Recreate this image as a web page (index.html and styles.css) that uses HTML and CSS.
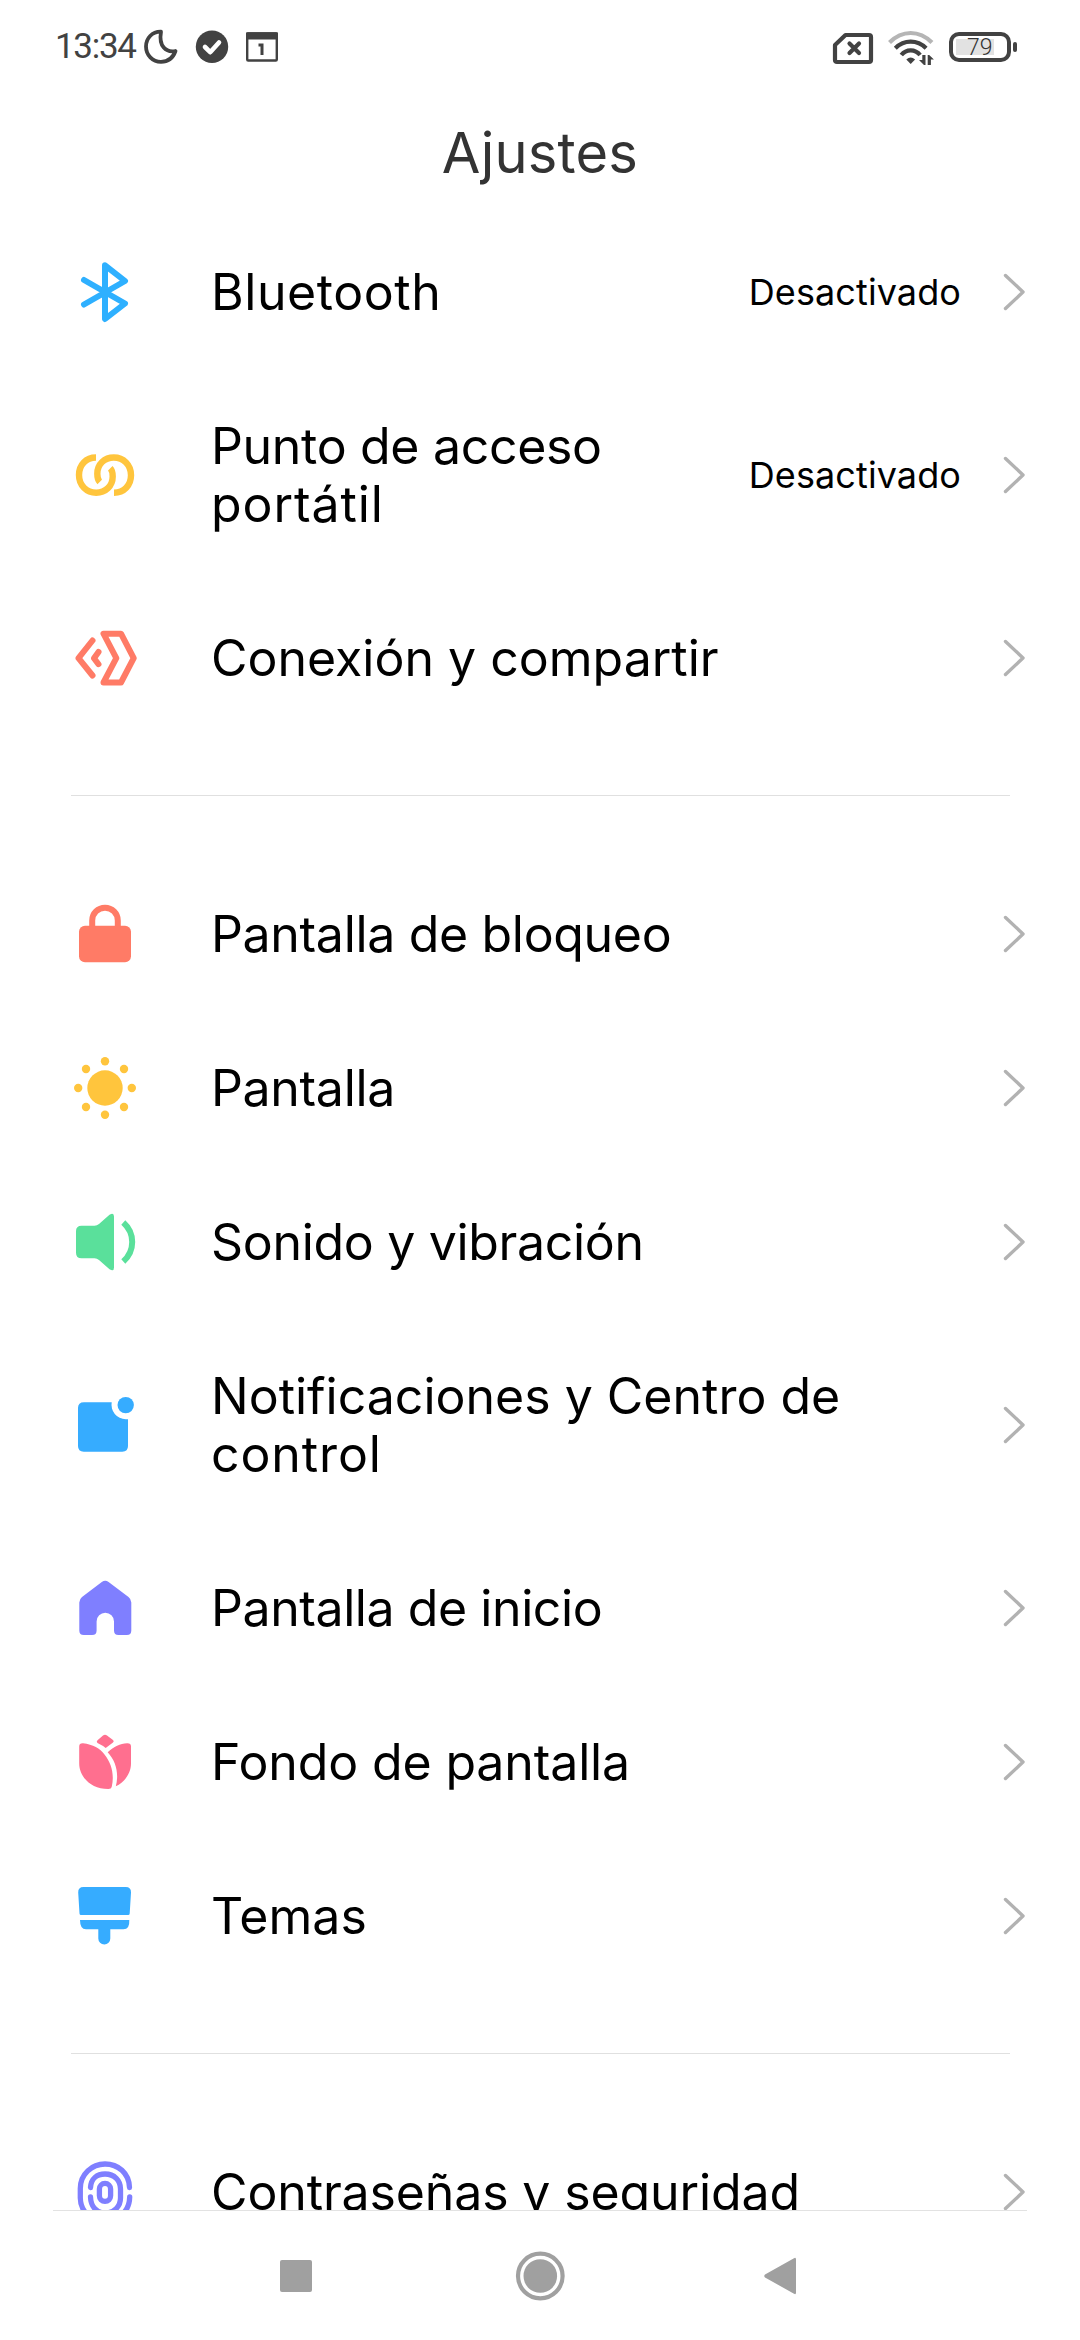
FILE: index.html
```
<!DOCTYPE html>
<html lang="es">
<head>
<meta charset="utf-8">
<title>Ajustes</title>
<link rel="stylesheet" href="styles.css">
</head>
<body>
<svg class="defs" width="0" height="0" aria-hidden="true">
  <symbol id="chevron" viewBox="0 0 24 40"><path d="M3.5 3.5 21 20 3.5 36.5" fill="none" stroke="#b2b2b2" stroke-width="3.4" stroke-linecap="round" stroke-linejoin="round"/></symbol>
</svg>
<div class="screen">
  <header class="status">
    <div class="status-side">
      <span class="clock">13:34</span>
      <svg class="moon" width="36" height="40" viewBox="0 0 36 40"><path d="M18 4.7C9 4.5 3 11.500 3 19.500c0 8.500 6.500 15.300 15 15.300 6.800 0 12-3.800 14.500-10.800-9.500 1.800-17-4.500-14.500-19.300z" fill="none" stroke="#424242" stroke-width="3.8" stroke-linejoin="round"/></svg>
      <svg class="check" width="34" height="40" viewBox="0 0 34 40"><circle cx="17" cy="19.800" r="16.200" fill="#424242"/><path d="m10 20 5.200 5.200L24 15.500" fill="none" stroke="#fff" stroke-width="4.600" stroke-linecap="round" stroke-linejoin="round"/></svg>
      <svg class="calendar" width="32" height="40" viewBox="0 0 32 40"><rect x="1.200" y="6.500" width="29.600" height="27" rx="1" fill="none" stroke="#424242" stroke-width="2.400"/><path d="M0 6.300Q0 5.300 1 5.300H31Q32 5.300 32 6.300V12.500H0z" fill="#424242"/><path d="M12.500 18H16V28" fill="none" stroke="#424242" stroke-width="3"/></svg>
    </div>
    <div class="status-side">
      <svg class="sim" width="42" height="40" viewBox="0 0 42 40"><path d="M13.500 8H37q2 0 2 2V33q0 2-2 2H5q-2 0-2-2V18z" fill="none" stroke="#424242" stroke-width="4.200" stroke-linejoin="round"/><path d="m17.500 16.500 9.500 9.500m0-9.500L17.500 26" stroke="#424242" stroke-width="4.200" stroke-linecap="round"/></svg>
      <svg class="wifi" width="46" height="40" viewBox="0 0 46 40" fill="none" stroke="#424242" stroke-width="4.200"><path d="M1.500 15.500Q11 6 22.700 6t21.200 9.500" stroke="#b5b5b5"/><path d="M7.300 21.300Q14 14.700 22.700 14.700t15.400 6.600"/><path d="M13.300 28Q17 23.300 22.700 23.300t9.400 4.700"/><path d="M18.300 32.500Q22.700 28.500 27.100 32.500L22.700 37z" fill="#424242" stroke="none"/><path d="M34.300 28h3.200v10h-1.500l-5-5h3.300zM39.700 38h3.200v-5.500h3l-4.700-4.500h-1.500z" fill="#424242" stroke="none"/></svg>
      <div class="battery"><div class="battery-body"><span class="battery-level">79</span></div><i class="battery-tip"></i></div>
    </div>
  </header>
  <h1 class="title">Ajustes</h1>

  <main class="list">
    <section class="group">
      <div class="row">
        <svg class="icon" viewBox="0 0 64 64" fill="none" stroke="#2eb0ff" stroke-width="6" stroke-linecap="round" stroke-linejoin="round"><path d="M11 20 52 43.500 32 59V5.300L52 21 11 44.500"/></svg>
        <span class="label wide">Bluetooth</span><span class="value">Desactivado</span><svg class="chevron"><use href="#chevron"/></svg>
      </div>
      <div class="row">
        <svg class="icon" viewBox="0 0 64 64" fill="none" stroke="#ffc53d" stroke-width="6.400"><path id="link" d="M23 14.500C13 14.500 6 22 6 32c0 10.300 7.500 17.700 17.200 17.700 9.300 0 16.500-6.700 16.500-16.200 0-3.500-.2-6-2.400-8.200"/><use href="#link" transform="rotate(180 32 32.100)"/></svg>
        <span class="label tight">Punto de acceso <span class="wider">portátil</span></span><span class="value">Desactivado</span><svg class="chevron"><use href="#chevron"/></svg>
      </div>
      <div class="row">
        <svg class="icon" viewBox="0 0 64 64" fill="none" stroke="#ff7b66" stroke-width="6" stroke-linecap="round" stroke-linejoin="round"><path d="M19.500 14.500 5.500 32.200l14 17.300M25.500 26 21 32.200l4.500 6M30.500 7.700H48L60.700 32.200 48 56.500H30.500L43.300 32.200z"/></svg>
        <span class="label">Conexión y compartir</span><svg class="chevron"><use href="#chevron"/></svg>
      </div>
    </section>
    <hr class="divider">
    <section class="group">
      <div class="row">
        <svg class="icon" viewBox="0 0 64 64"><rect x="6" y="23.700" width="52" height="36.500" rx="6" fill="#ff7b66"/><path d="M19.200 27V18.500a12.800 12.800 0 0 1 25.600 0V27" fill="none" stroke="#ff7b66" stroke-width="6"/></svg>
        <span class="label tight">Pantalla de bloqueo</span><svg class="chevron"><use href="#chevron"/></svg>
      </div>
      <div class="row">
        <svg class="icon" viewBox="0 0 64 64" fill="#ffc53d"><circle cx="32" cy="32" r="17.700"/><circle cx="32" cy="5.200" r="4.200"/><circle cx="32" cy="58.800" r="4.200"/><circle cx="5.200" cy="32" r="4.200"/><circle cx="58.800" cy="32" r="4.200"/><circle cx="13" cy="13" r="4.200"/><circle cx="51" cy="13" r="4.200"/><circle cx="13" cy="51" r="4.200"/><circle cx="51" cy="51" r="4.200"/></svg>
        <span class="label tight">Pantalla</span><svg class="chevron"><use href="#chevron"/></svg>
      </div>
      <div class="row">
        <svg class="icon" viewBox="0 0 64 64"><path d="M8.500 15.700H21.500Q24 15.700 26 14L36.500 4.700Q41 2 41 6.500V57.500Q41 62 36.500 59.300L26 50Q24 48.300 21.500 48.300H8.500Q3 48.300 3 42.800V21.200Q3 15.700 8.500 15.700z" fill="#5ae09b"/><path d="M50.300 12.500Q59.200 20.500 59.200 32T50.300 51.500" fill="none" stroke="#5ae09b" stroke-width="6"/></svg>
        <span class="label tight">Sonido y vibración</span><svg class="chevron"><use href="#chevron"/></svg>
      </div>
      <div class="row">
        <svg class="icon" viewBox="0 0 64 64" fill="#36acff"><path d="M11 9.300H38.700A14.500 14.500 0 0 0 52.700 26.300H55V53q0 5.700-5.700 5.700H10.700Q5 58.700 5 53V15Q5 9.300 11 9.300z"/><circle cx="52.700" cy="12.100" r="8.200"/></svg>
        <span class="label">Notificaciones y Centro de <span class="wider">control</span></span><svg class="chevron"><use href="#chevron"/></svg>
      </div>
      <div class="row">
        <svg class="icon" viewBox="0 0 64 64"><path d="M28.800 5.900q3.400-2.500 6.800 0L55.500 21Q58.300 23.200 58.300 26.500V54.500q0 4.500-4.500 4.500H45.500Q41 59 41 54.500V45.500a8.700 8.700 0 0 0-17.400 0V54.500Q23.600 59 19.100 59H10.800Q6.300 59 6.300 54.500V26.500Q6.300 23.200 9 21z" fill="#7f7fff"/></svg>
        <span class="label tighter">Pantalla de inicio</span><svg class="chevron"><use href="#chevron"/></svg>
      </div>
      <div class="row">
        <svg class="icon" viewBox="0 0 64 64" fill="#ff6f8f"><path d="M6.200 16.500q0-3.400 3.800-3.200C20 14.500 27 18.500 31.500 24.500 38.500 33.500 41.500 44 38.800 56.500q-.5 2.500-3.500 2.500C17 59 6.200 46 6.200 33.500z"/><path d="M34.700 22.300C41 16 47 14 54.200 13.200q3.800-.1 3.800 3.300V33.500C58 43 52 52 42.800 56.300 46 44 43.500 32 34.700 22.300z"/><path d="M30 5.500q2-1.500 4 0l6 4.500q1.500 1.200 0 2.500l-7.300 5.500q-3-2.500-8.200-5-1.500-1.200 0-2.700z"/></svg>
        <span class="label snug">Fondo de pantalla</span><svg class="chevron"><use href="#chevron"/></svg>
      </div>
      <div class="row">
        <svg class="icon" viewBox="0 0 64 64" fill="#36acff"><path d="M10.500 3H52.700Q58.200 3 58 8.500L56.700 29.500q-.1 1.500-1.500 1.500H8q-1.400 0-1.500-1.500L5.200 8.500Q5 3 10.500 3zM7 36H56.300q.5 9.300-5.800 9.300H37.300V54.500a6 6 0 0 1-12 0V45.300H13Q7 45.300 7 36z"/></svg>
        <span class="label">Temas</span><svg class="chevron"><use href="#chevron"/></svg>
      </div>
    </section>
    <hr class="divider">
    <section class="group">
      <div class="row">
        <svg class="icon" viewBox="0 0 64 64" fill="none" stroke="#7f7fff" stroke-width="5.300" stroke-linecap="round"><path d="M56.500 27.500C56 13 45 4 32 4S7.300 14 7.300 28.500V38Q7.300 46 12 52M56.700 37Q56.500 46 51.500 52M17.500 27.500C18 18.500 24 14 32 14c9.500 0 15.500 6.500 15.500 15V38c0 8-6 15-15.500 15-8.500 0-14.200-6.500-14.500-16"/><rect x="26.400" y="23.400" width="11.200" height="18" rx="5.600"/></svg>
        <span class="label snug">Contraseñas y seguridad</span><svg class="chevron"><use href="#chevron"/></svg>
      </div>
    </section>
  </main>

  <nav class="nav">
    <svg width="60" height="60" viewBox="0 0 60 60" fill="#a0a0a0"><rect x="14" y="14" width="32" height="32" rx="2"/></svg>
    <svg width="60" height="60" viewBox="0 0 60 60" fill="#a0a0a0"><circle cx="32.300" cy="30" r="22.300" fill="none" stroke="#a0a0a0" stroke-width="4.200"/><circle cx="32.300" cy="30" r="16.800"/></svg>
    <svg width="60" height="60" viewBox="0 0 60 60" fill="#a0a0a0"><path d="M44 12.300Q46 11 46 13.500V46.500Q46 49 44 47.700L15 31.500Q13.500 30 15 28.500z"/></svg>
  </nav>
</div>
</body>
</html>
```
FILE: styles.css
```
* { box-sizing: border-box; }

body {
  margin: 0;
  background: #fff;
  color: #000;
  font-family: Inter, Roboto, sans-serif;
}

.defs { position: absolute; }
svg { display: block; flex: none; }

.screen {
  display: flex;
  flex-direction: column;
  width: 1080px;
  height: 2340px;
  overflow: hidden;
}

/* Status bar */
.status {
  display: flex;
  justify-content: space-between;
  align-items: center;
  height: 94px;
  flex: none;
  padding: 0 63px 0 54px;
}
.status-side { display: flex; align-items: center; }
.clock {
  width: 89px;
  padding-left: 1px;
  color: #424242;
  font: 400 35px/42px Roboto, sans-serif;
  letter-spacing: -1.300px;
}
.moon { margin-right: 16px; }
.check { margin-right: 17px; }
.sim { margin-right: 14px; }
.wifi { margin-right: 15px; }

.battery { display: flex; align-items: center; gap: 2px; }
.battery-body {
  width: 62px;
  height: 30px;
  padding: 3px;
  border: 4.500px solid #424242;
  border-radius: 10px;
}
.battery-level {
  display: block;
  width: 38px;
  height: 16px;
  padding-left: 11px;
  background: #e2e2e2;
  color: #333;
  font: 300 23px/17px Roboto, sans-serif;
}
.battery-tip { width: 4px; height: 10px; border-radius: 2px; background: #424242; }

.title {
  flex: none;
  height: 121px;
  margin: 0;
  padding-top: 24px;
  color: #333;
  font-size: 56px;
  font-weight: 400;
  line-height: 70px;
  letter-spacing: .2px;
  text-align: center;
}

/* Settings list */
.list { flex: 1; min-height: 0; overflow: hidden; }
.row {
  display: flex;
  align-items: center;
  padding: 48px 54px 48px 73px;
}
.icon { width: 64px; height: 64px; margin: -3px 74px -3px 0; }
.label {
  flex: 1;
  font-size: 50px;
  line-height: 58px;
}
.wide { letter-spacing: .57px; }
.snug { letter-spacing: -.13px; }
.tight { letter-spacing: -.32px; }
.tighter { letter-spacing: -.42px; }
.wider { letter-spacing: .9px; }
.value {
  margin-right: 41px;
  font-size: 36px;
  line-height: 44px;
  letter-spacing: .1px;
}
.chevron { width: 24px; height: 40px; }
.divider {
  height: 1px;
  margin: 60px 70px 61px 71px;
  border: 0;
  background: #e0e0e0;
}

/* Navigation keys */
.nav {
  display: flex;
  flex: none;
  align-items: center;
  justify-content: space-between;
  height: 130px;
  margin: 0 53px;
  padding: 0 217px 0 213px;
  border-top: 1px solid #e2e2e2;
}
```
